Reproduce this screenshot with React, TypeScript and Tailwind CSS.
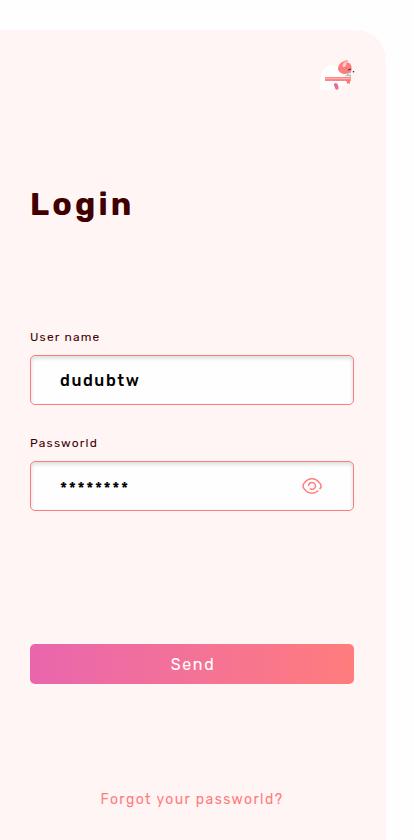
import { useState } from "react";

function FoxLogo() {
  return (
    <svg viewBox="0 0 36 32" className="h-8 w-9" role="img" aria-label="Sleeping fox">
      <path d="M1 30C-1 26 0 20 1 17 2 9 6 6 11 5.500c3-.5 5 0 7 1.500l13 2c1 4 1 8-2 11v3c-5 2-8 3-12 3-1 3-9 5-16 4Z" fill="#fff" />
      <path d="M18 9.500c0-6 4-8 10-9.500l-1 2.500c3 0 4 2 4.500 4v4.500c-1 2-4 3-7 3-3 0-5.500-2-6.500-4.500Z" fill="#ff7c7c" />
      <path d="M23 7c-1-3 1-5 4-6-1 2 0 4-2 6Z" fill="#f3cfcf" />
      <path d="m28 10 3-1" stroke="#333" strokeWidth="1.200" />
      <path d="M25 14.500c2-2 4-1 6-2v5c-3 0-4-1-6-3Z" fill="#f4f0f0" />
      <path d="m25 13.500 6-1M25 16l6-1M27 14l4 2.500" stroke="#aaa" strokeWidth=".8" />
      <circle cx="33.500" cy="11.800" r=".8" fill="#222" />
      <path d="M5 17h26v4H5Z" fill="#ff8585" />
      <path d="M5 18.500h26" stroke="#ffb0b0" strokeWidth="1" />
      <path d="M26 20h4v3.500h-3Z" fill="#f77" />
      <path d="M13.800 24.500c1.500-2.500 4-1.500 4.600 2 .6 3-.8 3.500-2.400 3-1-.5-1.500-3-2.200-5Z" fill="#ed6a97" />
    </svg>
  );
}

function EyeIcon() {
  return (
    <svg viewBox="0 0 20 16" className="h-4 w-5" fill="none" stroke="#ff7c7c" strokeWidth="1.5" strokeLinecap="round" aria-hidden="true">
      <path d="M18 10.700C20 8.400 19.400 7.200 18 5.400 16 2.700 13.300 .8 10 .8S4 2.700 2 5.400c-1.500 2-1.500 3.200 0 5.200 2 2.700 4.700 4.600 8 4.600 2.300 0 4.200-.8 5.900-2.200" />
      <path d="M6.600 7.400C6.900 5.700 8.200 4.600 10 4.600a3.400 3.400 0 1 1-1.700 6.300" />
    </svg>
  );
}

const field =
  "h-[50px] w-full rounded-[5px] border border-[#ff7c7c] bg-[#fefefe] pl-[29px] text-base font-medium tracking-widest text-black shadow-[inset_0_2px_4px_rgba(0,0,0,0.15)] outline-none";
const label = "mb-2 block text-xs leading-5 tracking-widest text-[#400000]";

export default function App() {
  const [name, setName] = useState("dudubtw");
  const [password, setPassword] = useState("********");

  return (
    <div className="min-h-screen bg-[#fefefe] pt-[30px] pr-7 font-['Rubik','Roboto',sans-serif]">
      <main className="flex min-h-[calc(100vh-30px)] flex-col rounded-tr-[30px] bg-[#fff5f4] px-8 pt-[30px] pl-[30px]">
        <header className="-mr-0.5 flex justify-end">
          <FoxLogo />
        </header>
        <h1 className="mt-[92px] text-[32px] leading-10 font-bold tracking-widest text-[#400000]">Login</h1>
        <form className="mt-[103px] flex flex-col" onSubmit={(e) => e.preventDefault()}>
          <label htmlFor="name" className={label}>User name</label>
          <input id="name" className={field} value={name} onChange={(e) => setName(e.target.value)} />
          <label htmlFor="password" className={`mt-7 ${label}`}>Passworld</label>
          <div className="relative">
            <input id="password" className={`${field} pt-1`} value={password} onChange={(e) => setPassword(e.target.value)} />
            <button type="button" aria-label="Show password" className="absolute inset-y-0 right-8 flex items-center">
              <EyeIcon />
            </button>
          </div>
          <button type="submit" className="mt-[133px] h-10 rounded-[5px] bg-linear-to-r from-[#e966ad] to-[#ff7c7c] pt-0.5 pl-0.5 text-base tracking-widest text-white">
            Send
          </button>
        </form>
        <a href="#forgot" className="mt-[106px] self-center text-sm leading-5 tracking-widest text-[#ff7c7c]">
          Forgot your passworld?
        </a>
      </main>
    </div>
  );
}
